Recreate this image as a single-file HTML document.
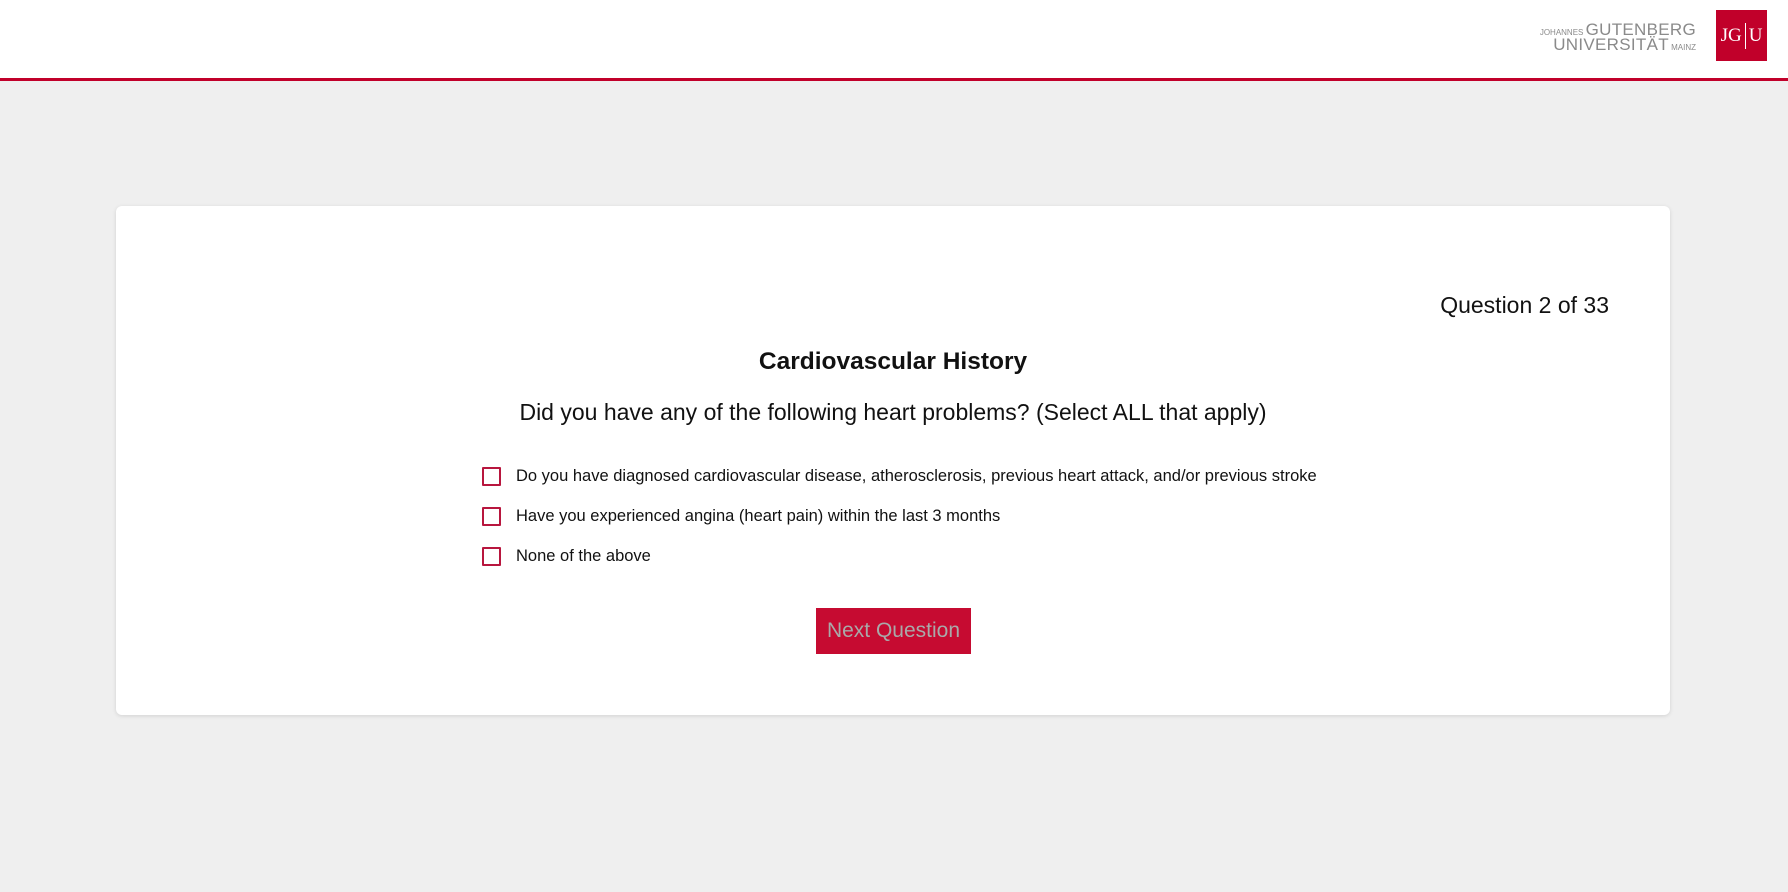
<!DOCTYPE html>
<html><head><style>
body{margin:0;width:1788px;height:892px;background:#efefef;font-family:"Liberation Sans",Arial,sans-serif;position:relative;overflow:hidden}
.hdr{position:absolute;left:0;top:0;width:1788px;height:78px;background:#fff;border-bottom:3px solid #c1002a}
.l1{position:absolute;right:92px;top:20px;color:#8a8a8a;font-size:17px;white-space:nowrap;letter-spacing:0.3px}
.l2{position:absolute;right:92px;top:35px;color:#8a8a8a;font-size:17px;white-space:nowrap;letter-spacing:0.3px}
.sm{font-size:8px;letter-spacing:0}
.logo{position:absolute;left:1716px;top:10px;width:51px;height:51px;background:#c1002a;color:#fff;font-family:"Liberation Serif",serif;font-size:19px;display:flex;align-items:center;justify-content:center}
.logo i{display:inline-block;width:1px;height:26px;background:#fff;margin:0 3px;font-style:normal}
.card{position:absolute;left:116px;top:206px;width:1554px;height:509px;background:#fff;border-radius:6px;box-shadow:0 1px 4px rgba(0,0,0,.12)}
.qn{position:absolute;right:61px;top:86px;font-size:23px;color:#111}
.t{position:absolute;left:0;width:100%;text-align:center;top:142px;font-size:24.5px;font-weight:bold;color:#111}
.q{position:absolute;left:0;width:100%;text-align:center;top:193px;font-size:23px;color:#111}
.row{position:absolute;left:366px;font-size:16.5px;color:#111;height:20px;line-height:20px}
.row b{position:absolute;left:0;top:1px;width:15px;height:15px;border:2px solid #b8163e;border-radius:1px}
.row span{position:absolute;left:34px;white-space:nowrap}
.btn{position:absolute;left:700px;top:402px;width:155px;height:46px;background:#c60b31;color:#a9a9a9;font-size:21px;text-align:center;line-height:46px}
</style></head><body>
<div class="hdr">
<div class="l1"><span class="sm">JOHANNES </span>GUTENBERG</div>
<div class="l2">UNIVERSITÄT<span class="sm"> MAINZ</span></div>
<div class="logo">JG<i></i>U</div>
</div>
<div class="card">
<div class="qn">Question 2 of 33</div>
<div class="t">Cardiovascular History</div>
<div class="q">Did you have any of the following heart problems? (Select ALL that apply)</div>
<div class="row" style="top:260px"><b></b><span>Do you have diagnosed cardiovascular disease, atherosclerosis, previous heart attack, and/or previous stroke</span></div>
<div class="row" style="top:300px"><b></b><span>Have you experienced angina (heart pain) within the last 3 months</span></div>
<div class="row" style="top:340px"><b></b><span>None of the above</span></div>
<div class="btn">Next Question</div>
</div>
</body></html>
